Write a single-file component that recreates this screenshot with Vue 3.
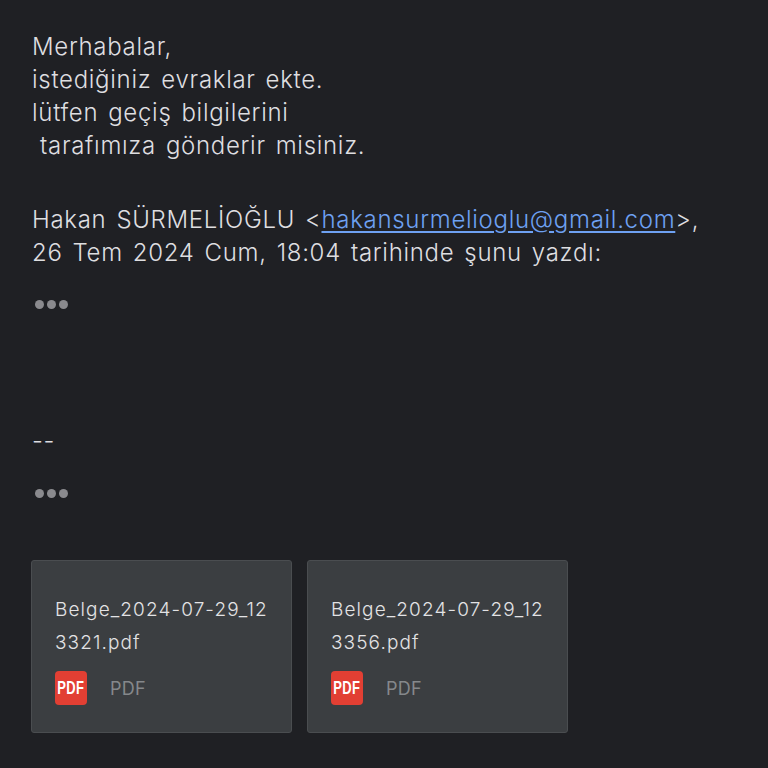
<script setup>
const files = [
  { id: 1, top: 'Belge_2024-07-29_12', bottom: '3321.pdf' },
  { id: 2, top: 'Belge_2024-07-29_12', bottom: '3356.pdf' },
]
</script>

<template>
  <main class="mail">
    <p class="para">Merhabalar,<br />istediğiniz evraklar ekte.<br />lütfen geçiş bilgilerini<br /><span class="indent">tarafımıza gönderir misiniz.</span></p>
    <p class="para quote-head">Hakan SÜRMELİOĞLU &lt;<a class="link">hakansurmelioglu@gmail.com</a>&gt;,<br />26 Tem 2024 Cum, 18:04 tarihinde şunu yazdı:</p>
    <div class="dots first"><i></i><i></i><i></i></div>
    <p class="para sig">--</p>
    <div class="dots second"><i></i><i></i><i></i></div>
    <div class="attachments">
      <article v-for="f in files" :key="f.id" class="card">
        <div class="name">{{ f.top }}<br />{{ f.bottom }}</div>
        <div class="meta">
          <span class="badge"><span class="badge-text">PDF</span></span>
          <span class="type">PDF</span>
        </div>
      </article>
    </div>
  </main>
</template>

<style>
html, body {
  margin: 0;
  background: #1f2024;
}
</style>

<style scoped>
.mail {
  width: 768px;
  height: 768px;
  box-sizing: border-box;
  padding: 30px 32px 0;
  background: #1f2024;
  color: #dedee0;
  font-family: Inter, "Noto Sans", sans-serif;
  overflow: hidden;
}
.para {
  margin: 0;
  font-size: 24px;
  font-weight: 300;
  line-height: 33px;
  letter-spacing: 0.7px;
  word-spacing: 2.5px;
}
.indent {
  padding-left: 8px;
}
.quote-head {
  margin-top: 41px;
}
.link {
  color: #6ea1f2;
  text-decoration: underline;
  text-underline-offset: 3px;
}
.dots {
  display: flex;
  gap: 3px;
  margin-left: 3px;
}
.dots i {
  width: 9px;
  height: 9px;
  border-radius: 50%;
  background: #8a8a8e;
}
.first {
  margin-top: 31px;
}
.sig {
  margin-top: 115px;
}
.second {
  margin-top: 32px;
}
.attachments {
  display: flex;
  gap: 15px;
  margin-top: 62px;
  margin-left: -1px;
}
.card {
  width: 261px;
  height: 173px;
  box-sizing: border-box;
  padding: 32px 23px 0;
  background: #3b3e41;
  border: 1px solid #4a4d50;
  border-radius: 3px;
}
.name {
  font-size: 19px;
  font-weight: 300;
  line-height: 33px;
  letter-spacing: 1.1px;
  color: #e3e3e5;
  white-space: nowrap;
}
.meta {
  display: flex;
  align-items: center;
  gap: 23px;
  margin-top: 12px;
}
.badge {
  width: 32px;
  height: 34px;
  display: flex;
  align-items: center;
  justify-content: center;
  background: #e23f33;
  border-radius: 4px;
}
.badge-text {
  display: inline-block;
  color: #fff;
  font-family: "Liberation Sans", sans-serif;
  font-size: 18px;
  font-weight: 700;
  letter-spacing: 0.5px;
  transform: scaleX(0.72);
}
.type {
  font-size: 18px;
  letter-spacing: 0.2px;
  color: #85888b;
}
</style>
